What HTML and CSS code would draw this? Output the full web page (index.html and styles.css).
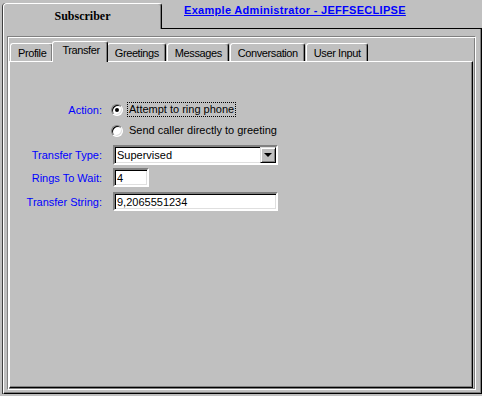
FILE: index.html
```html
<!DOCTYPE html>
<html lang="en">
<head>
    <meta charset="UTF-8">
    <meta name="viewport" content="width=device-width, initial-scale=1.0">
    <title>Subscriber | Transfer</title>
    <link rel="stylesheet" href="styles.css">
</head>
<body>
    <header class="top">
        <div class="main-tab">Subscriber</div>
        <div class="top-rest">
            <a href="#" class="admin-link">Example Administrator - JEFFSECLIPSE</a>
        </div>
    </header>

    <main class="frame">
        <div class="group">
            <nav class="tabs">
                <a href="#" class="tab">Profile</a>
                <a href="#" class="tab active">Transfer</a>
                <a href="#" class="tab">Greetings</a>
                <a href="#" class="tab">Messages</a>
                <a href="#" class="tab">Conversation</a>
                <a href="#" class="tab">User Input</a>
            </nav>

            <section class="page">
                <div class="row row-radio">
                    <span class="label">Action:</span>
                    <span class="radio checked"></span>
                    <span class="radio-text focused">Attempt to ring phone</span>
                </div>
                <div class="row row-radio">
                    <span class="label"></span>
                    <span class="radio"></span>
                    <span class="radio-text">Send caller directly to greeting</span>
                </div>

                <div class="row row-select">
                    <span class="label">Transfer Type:</span>
                    <div class="combo">
                        <span class="combo-value">Supervised</span>
                        <span class="combo-btn"></span>
                    </div>
                </div>
                <div class="row row-field">
                    <span class="label">Rings To Wait:</span>
                    <input type="text" class="field field-short" value="4">
                </div>
                <div class="row row-field row-last">
                    <span class="label">Transfer String:</span>
                    <input type="text" class="field field-long" value="9,2065551234">
                </div>
            </section>
        </div>
    </main>
</body>
</html>
```

FILE: styles.css
```css
:root {
    --face: #c0c0c0;
    --shadow: #808080;
    --light: #dfdfdf;
    --label-blue: #0000ff;
}

* {
    box-sizing: border-box;
    margin: 0;
    padding: 0;
}

body {
    width: 482px;
    height: 396px;
    background: var(--face);
    font-family: 'Liberation Sans', Arial, sans-serif;
    font-size: 11px;
    color: #000;
    overflow: hidden;
}

/* top strip: big tab + admin link */
.top {
    display: flex;
    height: 29px;
}

.main-tab {
    width: 159px;
    height: 26px;
    margin: 3px 0 0 3px;
    border-top: 1px solid #fff;
    border-left: 1px solid #fff;
    border-right: 1px solid #000;
    border-radius: 4px 3px 0 0;
    box-shadow: inset -1px 0 var(--shadow), -1px 0 #404040;
    font-family: 'Liberation Serif', 'Times New Roman', serif;
    font-weight: bold;
    font-size: 12px;
    line-height: 24px;
    text-align: center;
}

.top-rest {
    flex: 1;
    border-bottom: 1px solid #000;
    padding: 3px 0 0 22px;
}

.admin-link {
    color: #0000ff;
    font-weight: bold;
    font-size: 11px;
    letter-spacing: 0.3px;
    line-height: 15px;
}

/* outer body of the big tab */
.frame {
    width: 479px;
    height: 365px;
    margin-left: 3px;
    border-left: 1px solid #fff;
    border-right: 1px solid #000;
    border-bottom: 1px solid #000;
    box-shadow: inset -1px -1px var(--shadow), -1px 0 #404040;
    padding: 7px 0 0 3px;
}

.group {
    width: 469px;
    height: 354px;
    padding: 1px;
    border: 1px solid;
    border-color: var(--shadow) #fff #fff var(--shadow);
    box-shadow: inset 1px 1px #fff, inset -1px -1px var(--shadow);
}

.tabs {
    display: flex;
    align-items: flex-end;
    height: 23px;
    padding-left: 1px;
}

.tab {
    position: relative;
    height: 18px;
    padding: 0 6px 0 7px;
    margin-right: 1px;
    border: 1px solid;
    border-color: #fff #000 transparent #fff;
    border-bottom: none;
    border-radius: 3px 3px 0 0;
    box-shadow: inset -1px 0 var(--shadow);
    background: var(--face);
    color: #000;
    text-decoration: none;
    letter-spacing: -0.4px;
    line-height: 18px;
    white-space: nowrap;
}

.tab.active {
    height: 21px;
    margin: 0 -1px -1px -2px;
    padding: 0 7px 0 9px;
    line-height: 17px;
    z-index: 1;
}

.page {
    width: 464px;
    height: 327px;
    border: 1px solid;
    border-color: #fff #000 #000 #fff;
    box-shadow: inset -1px -1px var(--shadow);
    padding-top: 40px;
}

/* form rows */
.row {
    display: flex;
    align-items: center;
}

.label {
    width: 92px;
    flex-shrink: 0;
    text-align: right;
    color: var(--label-blue);
}

.row-radio {
    height: 15px;
    margin-bottom: 6px;
}

.row-select {
    margin-top: 7px;
    height: 20px;
}

.row-field {
    margin-top: 3px;
    height: 19px;
}

.row-last {
    margin-top: 5px;
}

.radio {
    position: relative;
    width: 12px;
    height: 12px;
    margin: 0 4px 0 9px;
    border-radius: 50%;
    background: #fff;
    border: 1px solid;
    border-color: var(--shadow) #fff #fff var(--shadow);
    box-shadow: inset 1px 1px #000, inset -1px -1px var(--light);
}

.radio.checked::after {
    content: '';
    position: absolute;
    left: 3px;
    top: 3px;
    width: 4px;
    height: 4px;
    border-radius: 50%;
    background: #000;
}

.radio-text {
    line-height: 13px;
    padding: 0 1px;
    border: 1px solid transparent;
}

.radio-text.focused {
    border: 1px dotted #000;
}

.combo {
    display: flex;
    align-items: center;
    width: 165px;
    height: 20px;
    margin-left: 11px;
    background: #fff;
    border: 2px solid;
    border-color: var(--shadow) #fff #fff var(--shadow);
    box-shadow: inset 1px 1px #000, inset -1px -1px var(--light);
}

.combo-value {
    flex: 1;
    padding-left: 2px;
}

.combo-btn {
    position: relative;
    width: 16px;
    height: 16px;
    background: var(--face);
    border: 1px solid;
    border-color: var(--light) #000 #000 var(--light);
    box-shadow: inset 1px 1px #fff, inset -1px -1px var(--shadow);
}

.combo-btn::after {
    content: '';
    position: absolute;
    left: 3px;
    top: 5px;
    border-left: 4px solid transparent;
    border-right: 4px solid transparent;
    border-top: 4px solid #000;
}

.field {
    height: 19px;
    margin-left: 11px;
    padding: 0 2px;
    background: #fff;
    border: 2px solid;
    border-color: var(--shadow) #fff #fff var(--shadow);
    box-shadow: inset 1px 1px #000, inset -1px -1px var(--light);
    font-family: 'Liberation Sans', Arial, sans-serif;
    font-size: 11px;
    color: #000;
    outline: none;
}

.field-short {
    width: 36px;
}

.field-long {
    width: 165px;
}
```
